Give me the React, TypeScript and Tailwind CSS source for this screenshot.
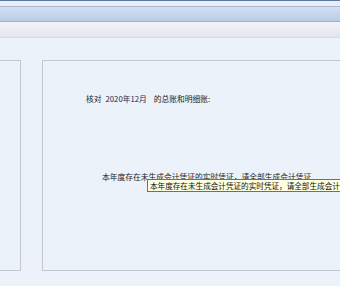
import React from "react";

export default function App() {
  const cjk = { fontFamily: '"Noto Sans CJK SC", "Noto Sans", sans-serif' };
  return (
    <div className="w-[340px] h-[286px] overflow-hidden bg-[#ebf2fa] flex flex-col" style={cjk}>
      {/* header bars */}
      <div className="h-[1px] bg-[#5b78a4]" />
      <div className="h-[5px] bg-[#e8eef7]" />
      <div className="h-[1px] bg-[#a9b9d2]" />
      <div className="h-[14px] bg-gradient-to-b from-[#d3e0f2] to-[#b9cbe5]" />
      <div className="h-[1px] bg-[#9db1cf]" />
      <div className="h-[15px] bg-gradient-to-b from-[#f3f3f9] to-[#e3e5ef]" />
      <div className="h-[1px] bg-[#d2dae6]" />
      {/* body */}
      <div className="flex gap-[21px] mt-[22px] h-[211px]">
        <div className="w-[21px] shrink-0 border-t border-r border-b border-[#c4c8ce] bg-[#ebf2fa]" />
        <div className="w-[320px] shrink-0 relative border-t border-l border-b border-[#c4c8ce] bg-[#ebf2fa]">
          <div className="pt-[33px] pl-[43px] text-[7.75px] leading-[10px] text-[#222] whitespace-nowrap">
            <span>核对</span>
            <span className="ml-[4px] text-[#1f2650]">2020年12月</span>
            <span className="ml-[7px]">的总账和明细账:</span>
          </div>
          <div className="pt-[68px] pl-[59px] text-[7.75px] leading-[10px] text-[#222] whitespace-nowrap">
            本年度存在未生成会计凭证的实时凭证，请全部生成会计凭证
          </div>
          <div className="absolute left-[104px] top-[118px] h-[13px] border border-[#6f6f6f] bg-[#ffffe1] pl-[2px] pr-[3px] text-[7.6px] leading-[11px] text-[#111] whitespace-nowrap">
            本年度存在未生成会计凭证的实时凭证，请全部生成会计凭证
          </div>
        </div>
      </div>
    </div>
  );
}
